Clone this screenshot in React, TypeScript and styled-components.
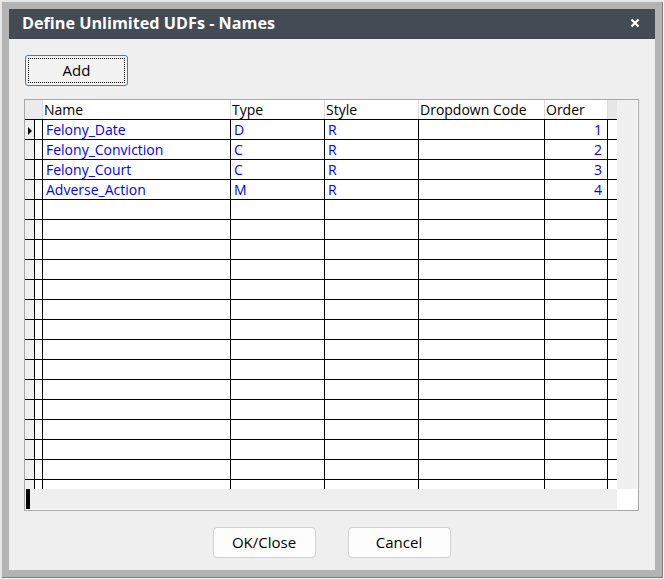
import React from 'react';
import styled, { createGlobalStyle } from 'styled-components';

const GlobalStyle = createGlobalStyle`
  body {
    margin: 0;
    font-family: 'Open Sans', 'Noto Sans', sans-serif;
  }
`;

type Column = { key: string; title: string; width: number; align?: 'left' | 'right' };

const columns: Column[] = [
  { key: 'name', title: 'Name', width: 188 },
  { key: 'type', title: 'Type', width: 94 },
  { key: 'style', title: 'Style', width: 94 },
  { key: 'dropdown', title: 'Dropdown Code', width: 126 },
  { key: 'order', title: 'Order', width: 63, align: 'right' },
];

type Udf = { name: string; type: string; style: string; dropdown: string; order: string };

const udfs: Udf[] = [
  { name: 'Felony_Date', type: 'D', style: 'R', dropdown: '', order: '1' },
  { name: 'Felony_Conviction', type: 'C', style: 'R', dropdown: '', order: '2' },
  { name: 'Felony_Court', type: 'C', style: 'R', dropdown: '', order: '3' },
  { name: 'Adverse_Action', type: 'M', style: 'R', dropdown: '', order: '4' },
];

const TOTAL_ROWS = 19;

const Window = styled.div`
  box-sizing: border-box;
  width: 664px;
  height: 579px;
  background: #b3b3b3;
  border-left: 2px solid #e6e6e6;
  border-top: 2px solid #e6e6e6;
  border-right: 1px solid #f4f4f4;
  border-bottom: 1px solid #f4f4f4;
  box-shadow: inset -1px -1px 0 #7d7d7d;
  padding: 7px 8px 8px 7px;
  display: flex;
  flex-direction: column;
`;

const TitleBar = styled.div`
  box-sizing: border-box;
  height: 30px;
  flex: none;
  background: #434b54;
  color: #fff;
  display: flex;
  align-items: center;
  justify-content: space-between;
  padding: 0 15px 2px 13px;
  font-weight: 700;
  font-size: 16.2px;
`;

const CloseIcon = styled.svg`
  width: 10px;
  height: 10px;
  display: block;
`;

const Body = styled.div`
  flex: 1;
  background: #efefef;
  padding: 16px 16px 12px 15px;
  display: flex;
  flex-direction: column;
`;

const Button = styled.button<{ $focused?: boolean }>`
  box-sizing: border-box;
  width: 103px;
  height: 31px;
  margin: 0;
  font-family: 'Open Sans', 'Noto Sans', sans-serif;
  font-size: 15px;
  color: #000;
  padding: 0 0 2px;
  background: ${(p) => (p.$focused ? '#f2f2f2' : '#fdfdfd')};
  border: 1px solid ${(p) => (p.$focused ? '#2f7fd6' : '#d0d0d0')};
  border-radius: ${(p) => (p.$focused ? '3px' : '4px')};
  outline: ${(p) => (p.$focused ? '1px dotted #000' : 'none')};
  outline-offset: -4px;
`;

const AddButton = styled(Button)`
  margin-left: 1px;
  flex: none;
`;

const Grid = styled.div`
  margin-top: 13px;
  box-sizing: border-box;
  height: 412px;
  border: 1px solid #a8a8a8;
  background: #fff;
  padding: 0 1px 1px 0;
  display: flex;
`;

const ColumnsArea = styled.div`
  width: 592px;
  display: flex;
  flex-direction: column;
`;

const Row = styled.div<{ $header?: boolean }>`
  box-sizing: border-box;
  height: 20px;
  flex: none;
  display: flex;
  border-bottom: 1px solid #000;
  font-size: 14px;
  line-height: 19px;
  color: ${(p) => (p.$header ? '#000' : '#0000ff')};
`;

const Rows = styled.div`
  height: 369px;
  overflow: hidden;
  display: flex;
  flex-direction: column;
`;

const Cell = styled.div<{ $width: number; $align?: 'left' | 'right'; $header?: boolean }>`
  box-sizing: border-box;
  width: ${(p) => p.$width}px;
  flex: none;
  border-right: 1px solid ${(p) => (p.$header ? '#dcdcdc' : '#000')};
  padding: ${(p) => (p.$header ? '0 2px 0 1px' : p.$align === 'right' ? '0 5px 0 3px' : '0 3px 0 3px')};
  text-align: ${(p) => p.$align ?? 'left'};
  white-space: nowrap;
  overflow: hidden;
`;

const Corner = styled.div`
  box-sizing: border-box;
  width: 18px;
  flex: none;
  background: #ebebeb;
  border-right: 1px solid #dcdcdc;
`;

const Indicator = styled.div`
  box-sizing: border-box;
  width: 10px;
  flex: none;
  background: #f0f0f0;
  border-right: 1px solid #000;
  display: flex;
  align-items: center;
  padding: 2px 0 0 3px;
`;

const Arrow = styled.span`
  width: 0;
  height: 0;
  border-left: 4px solid #000;
  border-top: 4px solid transparent;
  border-bottom: 4px solid transparent;
`;

const Spacer = styled.div`
  box-sizing: border-box;
  width: 8px;
  flex: none;
  border-right: 1px solid #000;
`;

const Filler = styled.div<{ $header?: boolean }>`
  width: 9px;
  flex: none;
  background: ${(p) => (p.$header ? '#e6e6e6' : '#fff')};
`;

const HScroll = styled.div`
  height: 20px;
  flex: none;
  background: #efefef;
  display: flex;
`;

const Caret = styled.div`
  width: 4px;
  margin-left: 1px;
  background: #000;
`;

const VScroll = styled.div`
  width: 20px;
  display: flex;
  flex-direction: column;
`;

const VTrack = styled.div`
  flex: 1;
  background: #f0f0f0;
`;

const ScrollCorner = styled.div`
  height: 20px;
  background: #fff;
`;

const Footer = styled.div`
  margin-top: 16px;
  display: flex;
  justify-content: center;
  gap: 32px;
`;

export default function App() {
  const rows = Array.from({ length: TOTAL_ROWS }, (_, i) => udfs[i]);

  return (
    <>
      <GlobalStyle />
      <Window>
        <TitleBar>
          <span>Define Unlimited UDFs - Names</span>
          <CloseIcon viewBox="0 0 10 10">
            <path d="M1.5 1.5 L8.5 8.5 M8.5 1.5 L1.5 8.5" stroke="#fff" strokeWidth="2.2" />
          </CloseIcon>
        </TitleBar>
        <Body>
          <AddButton $focused>Add</AddButton>
          <Grid>
            <ColumnsArea>
              <Row $header>
                <Corner />
                {columns.map((c) => (
                  <Cell key={c.key} $width={c.width} $header>
                    {c.title}
                  </Cell>
                ))}
                <Filler $header />
              </Row>
              <Rows>
                {rows.map((r, i) => (
                  <Row key={i}>
                    <Indicator>{i === 0 && <Arrow />}</Indicator>
                    <Spacer />
                    {columns.map((c) => (
                      <Cell key={c.key} $width={c.width} $align={c.align}>
                        {r ? r[c.key as keyof Udf] : ''}
                      </Cell>
                    ))}
                    <Filler />
                  </Row>
                ))}
              </Rows>
              <HScroll>
                <Caret />
              </HScroll>
            </ColumnsArea>
            <VScroll>
              <VTrack />
              <ScrollCorner />
            </VScroll>
          </Grid>
          <Footer>
            <Button>OK/Close</Button>
            <Button>Cancel</Button>
          </Footer>
        </Body>
      </Window>
    </>
  );
}
